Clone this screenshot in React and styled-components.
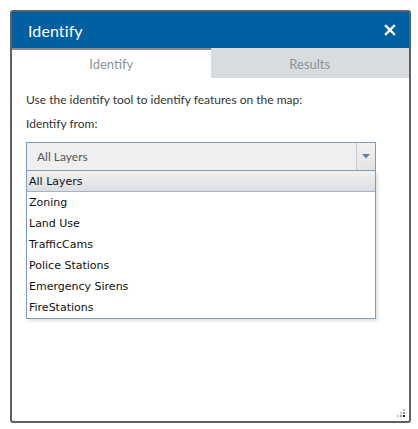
import styled, { createGlobalStyle } from "styled-components";

const GlobalStyle = createGlobalStyle`
  body {
    margin: 0;
    background: #fff;
    font-family: Lato, "Open Sans", sans-serif;
  }
`;

const Page = styled.div`
  padding: 10px 0 0 10px;
`;

const Panel = styled.div`
  width: 401px;
  height: 413px;
  box-sizing: border-box;
  border: 2px solid #5b6169;
  border-radius: 3px;
  display: flex;
  flex-direction: column;
  position: relative;
  background: #fff;
`;

const Header = styled.div`
  height: 36px;
  background: #0060a2;
  color: #fff;
  display: flex;
  align-items: center;
  justify-content: space-between;
  padding: 0 13px 0 16px;
`;

const Title = styled.div`
  font-size: 16px;
  font-weight: 400;
  letter-spacing: 0.1px;
`;

const CloseButton = styled.button`
  border: 0;
  background: none;
  padding: 0;
  width: 12px;
  height: 12px;
  display: flex;
  cursor: pointer;
`;

const Tabs = styled.div`
  display: flex;
  height: 30px;
`;

const Tab = styled.div`
  flex: 1;
  display: flex;
  align-items: center;
  justify-content: center;
  font-size: 13px;
  color: #8c9298;
  box-sizing: border-box;
  background: ${(p) => (p.active ? "#fff" : "#d9dcdf")};
  border-top: 2px solid ${(p) => (p.active ? "#878d95" : "#d9dcdf")};
`;

const Content = styled.div`
  padding: 14px 14px 0 14px;
  color: #333;
  font-size: 12px;
`;

const Line = styled.p`
  margin: 0 0 8px;
  line-height: 16px;
`;

const Select = styled.div`
  margin-top: 10px;
  width: 350px;
  height: 29px;
  box-sizing: border-box;
  border: 1px solid #7d9dbd;
  background: #efefef;
  display: flex;
  align-items: stretch;
`;

const SelectValue = styled.div`
  flex: 1;
  display: flex;
  align-items: center;
  padding-left: 10px;
  color: #555;
  font-size: 12px;
`;

const ArrowButton = styled.div`
  width: 18px;
  border-left: 1px solid #c3ccd6;
  background: linear-gradient(#f2f2f2, #e4e4e4);
  display: flex;
  align-items: center;
  justify-content: center;
`;

const List = styled.div`
  width: 350px;
  box-sizing: border-box;
  border: 1px solid #7d9dbd;
  border-top: 0;
  background: #fff;
  box-shadow: 2px 2px 3px rgba(0, 0, 0, 0.12);
`;

const Option = styled.div`
  height: 21px;
  box-sizing: border-box;
  padding: 1px 0 0 2px;
  display: flex;
  align-items: center;
  font-family: "DejaVu Sans", Verdana, sans-serif;
  font-size: 11px;
  color: #111;
  background: ${(p) =>
    p.selected ? "linear-gradient(#f1f1f1, #dcdee1)" : "transparent"};
  border-bottom: 1px solid ${(p) => (p.selected ? "#9fb5cc" : "transparent")};
`;

const Grip = styled.svg`
  position: absolute;
  right: 3px;
  bottom: 3px;
`;

const layers = [
  "All Layers",
  "Zoning",
  "Land Use",
  "TrafficCams",
  "Police Stations",
  "Emergency Sirens",
  "FireStations",
];

export default function App() {
  return (
    <Page>
      <GlobalStyle />
      <Panel>
        <Header>
          <Title>Identify</Title>
          <CloseButton aria-label="Close">
            <svg width="12" height="12" viewBox="0 0 12 12">
              <path
                d="M2 2 L10 10 M10 2 L2 10"
                stroke="#fff"
                strokeWidth="2.4"
                strokeLinecap="square"
              />
            </svg>
          </CloseButton>
        </Header>
        <Tabs>
          <Tab active>Identify</Tab>
          <Tab>Results</Tab>
        </Tabs>
        <Content>
          <Line>Use the identify tool to identify features on the map:</Line>
          <Line>Identify from:</Line>
          <Select>
            <SelectValue>All Layers</SelectValue>
            <ArrowButton>
              <svg width="8" height="5" viewBox="0 0 8 5">
                <path d="M0 0 H8 L4 4.5 Z" fill="#5a80aa" />
              </svg>
            </ArrowButton>
          </Select>
          <List>
            {layers.map((name, i) => (
              <Option key={name} selected={i === 0}>
                {name}
              </Option>
            ))}
          </List>
        </Content>
        <Grip width="10" height="10" viewBox="0 0 10 10">
          <rect x="7" y="1" width="2" height="2" fill="#c8c8c8" />
          <rect x="4" y="4" width="2" height="2" fill="#c8c8c8" />
          <rect x="7" y="4" width="2" height="2" fill="#9a9a9a" />
          <rect x="1" y="7" width="2" height="2" fill="#c8c8c8" />
          <rect x="4" y="7" width="2" height="2" fill="#9a9a9a" />
          <rect x="7" y="7" width="2" height="2" fill="#222" />
        </Grip>
      </Panel>
    </Page>
  );
}
